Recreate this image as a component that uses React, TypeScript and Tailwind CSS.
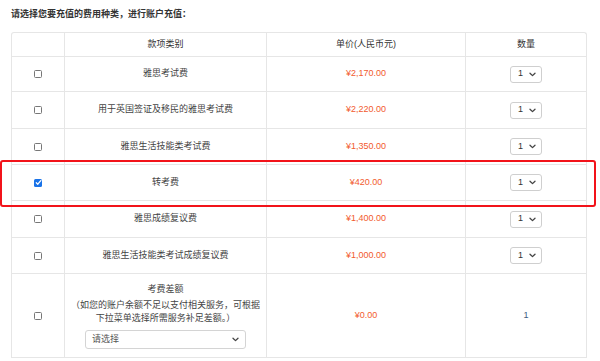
import React from "react";

const rows = [
  { name: "雅思考试费", price: "¥2,170.00", h: "h-[35px]" },
  { name: "用于英国签证及移民的雅思考试费", price: "¥2,220.00", h: "h-[37px]" },
  { name: "雅思生活技能类考试费", price: "¥1,350.00", h: "h-[36px]" },
  { name: "转考费", price: "¥420.00", h: "h-[36px]", checked: true },
  { name: "雅思成绩复议费", price: "¥1,400.00", h: "h-[37px]" },
  { name: "雅思生活技能类考试成绩复议费", price: "¥1,000.00", h: "h-[36px]" },
];

function Chevron({ cls }: { cls?: string }) {
  return (
    <svg width="7" height="5" viewBox="0 0 7 5" className={cls}>
      <path d="M1 1.2 L3.5 3.6 L6 1.2" fill="none" stroke="#444" strokeWidth="1.3" strokeLinecap="round" strokeLinejoin="round" />
    </svg>
  );
}

function Checkbox({ checked }: { checked?: boolean }) {
  if (checked) {
    return (
      <div className="w-[8px] h-[8px] rounded-[1.5px] bg-[#1a73e8] flex items-center justify-center">
        <svg width="7" height="7" viewBox="0 0 7 7">
          <path d="M1.3 3.8 L2.8 5.2 L5.8 1.6" fill="none" stroke="#fff" strokeWidth="1.3" strokeLinecap="round" strokeLinejoin="round" />
        </svg>
      </div>
    );
  }
  return <div className="w-[8px] h-[8px] rounded-[1.5px] border border-[#777] bg-white" />;
}

function QtySelect() {
  return (
    <div className="w-[32px] h-[17px] border border-[#cfcfcf] rounded-[3px] bg-white flex items-center justify-between pl-[7px] pr-[5px]">
      <span className="text-[9px] text-[#333]">1</span>
      <Chevron />
    </div>
  );
}

const cell = "flex items-center justify-center border-r border-b border-[#e6e6e6]";
const cellLast = "flex items-center justify-center border-b border-[#e6e6e6]";

export default function App() {
  return (
    <div
      className="relative w-[600px] h-[361px] bg-white overflow-hidden text-[#333]"
      style={{ fontFamily: '"Liberation Sans", "Noto Sans CJK SC", sans-serif' }}
    >
      <div className="pl-[11px] pt-[8px] text-[9px] leading-[12px] font-bold text-[#333]">
        请选择您要充值的费用种类，进行账户充值：
      </div>
      <div className="ml-[11px] mt-[12px] w-[576px] border-t border-l border-r border-[#e6e6e6] rounded-t-[3px] grid grid-cols-[53px_202px_199px_1fr] text-[9px]">
        <div className={`${cell} h-[24px]`} />
        <div className={`${cell} h-[24px]`}>款项类别</div>
        <div className={`${cell} h-[24px]`}>单价(人民币元)</div>
        <div className={`${cellLast} h-[24px]`}>数量</div>
        {rows.map((r) => (
          <React.Fragment key={r.name}>
            <div className={`${cell} ${r.h}`}>
              <Checkbox checked={r.checked} />
            </div>
            <div className={`${cell} ${r.h} text-[#444]`}>{r.name}</div>
            <div className={`${cell} ${r.h} text-[#f25a2e]`}>{r.price}</div>
            <div className={`${cellLast} ${r.h}`}>
              <QtySelect />
            </div>
          </React.Fragment>
        ))}
        <div className={`${cell} h-[84px]`}>
          <Checkbox />
        </div>
        <div className={`${cell} h-[84px] flex-col text-[#444] leading-[13px]`}>
          <div>考费差额</div>
          <div className="mt-[3px]">（如您的账户余额不足以支付相关服务，可根据</div>
          <div>下拉菜单选择所需服务补足差额。）</div>
          <div className="mt-[5px] w-[161px] h-[19px] border border-[#d4d4d4] rounded-[3px] bg-white flex items-center justify-between pl-[6px] pr-[6px]">
            <span className="text-[#555]">请选择</span>
            <Chevron />
          </div>
        </div>
        <div className={`${cell} h-[84px] text-[#f25a2e]`}>¥0.00</div>
        <div className={`${cellLast} h-[84px] text-[#3d5a80]`}>1</div>
      </div>
      <div className="absolute left-[0px] top-[160px] w-[596px] h-[47px] border-2 border-[#f2131a] rounded-[3px] pointer-events-none" />
    </div>
  );
}
